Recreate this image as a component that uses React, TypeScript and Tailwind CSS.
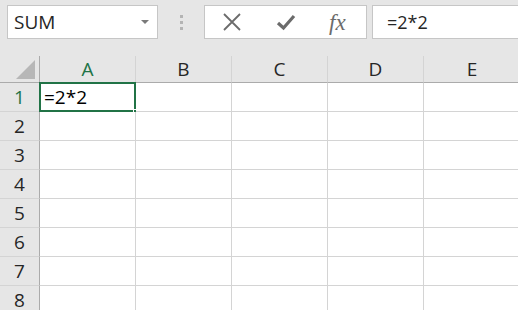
const cols = ['A', 'B', 'C', 'D', 'E'];
const rows = [1, 2, 3, 4, 5, 6, 7, 8];

const FormulaBar = () => (
  <div className="h-[56px] bg-[#e6e6e6] flex items-start pt-[5px] pl-[7px]">
    {/* Name box */}
    <div className="w-[151px] h-[34px] bg-white border border-[#c6c6c6] flex items-center justify-between pl-[6px] pr-[8px]">
      <span className="text-[19px] text-[#262626]">SUM</span>
      <svg width="8" height="4" viewBox="0 0 8 4">
        <path d="M0 0 L8 0 L4 4 Z" fill="#7a7a7a" />
      </svg>
    </div>

    {/* Separator dots */}
    <div className="w-[46px] h-[34px] flex flex-col items-center justify-center gap-[3px]">
      <div className="w-[3px] h-[3px] bg-[#b4b4b4]" />
      <div className="w-[3px] h-[3px] bg-[#b4b4b4]" />
      <div className="w-[3px] h-[3px] bg-[#b4b4b4]" />
    </div>

    {/* Cancel / enter / fx */}
    <div className="w-[163px] h-[34px] bg-white border border-[#c6c6c6] flex items-center pl-[18px]">
      <svg width="18" height="18" viewBox="0 0 18 18">
        <path d="M1 1 L17 17 M17 1 L1 17" fill="none" stroke="#6b6b6b" strokeWidth="1.8" />
      </svg>
      <svg className="ml-[34px]" width="22" height="22" viewBox="0 0 22 22">
        <path d="M3 12 L8.5 17 L19 5" fill="none" stroke="#6b6b6b" strokeWidth="3.2" strokeLinejoin="miter" />
      </svg>
      <span
        className="ml-[32px] text-[23px] italic text-[#6b6b6b] leading-none"
        style={{ fontFamily: '"Liberation Serif", serif' }}
      >
        fx
      </span>
    </div>

    {/* Formula input */}
    <div className="ml-[5px] flex-1 h-[34px] bg-white border border-[#c6c6c6] border-r-0 flex items-center pl-[14px]">
      <span className="text-[18px] text-[#262626]">=2*2</span>
    </div>
  </div>
);

const Sheet = () => (
  <div className="grid grid-cols-[40px_96px_96px_96px_96px_96px] grid-rows-[27px_repeat(8,29px)]">
    {/* corner */}
    <div className="bg-[#e6e6e6] border-r border-b border-[#ababab] relative">
      <svg className="absolute right-[4px] bottom-[3px]" width="19" height="19" viewBox="0 0 19 19">
        <path d="M19 0 L19 19 L0 19 Z" fill="#b7b7b7" />
      </svg>
    </div>
    {cols.map((c) => (
      <div
        key={c}
        className={`bg-[#e6e6e6] border-b border-[#ababab] flex items-center justify-center text-[19px] ${
          c === 'A' ? 'text-[#217346] bg-[#e1e1e1]' : 'text-[#262626]'
        } ${c === 'E' ? '' : 'border-r border-r-[#d4d4d4]'}`}
      >
        {c}
      </div>
    ))}
    {rows.map((r) => (
      <>
        <div
          key={`h${r}`}
          className={`bg-[#e6e6e6] border-r border-r-[#ababab] border-b border-b-[#d4d4d4] flex items-center justify-center text-[19px] ${
            r === 1 ? 'text-[#217346]' : 'text-[#262626]'
          }`}
        >
          {r}
        </div>
        {cols.map((c) => (
          <div
            key={`${c}${r}`}
            className="bg-white border-r border-b border-[#d4d4d4] relative"
          >
            {c === 'A' && r === 1 && (
              <>
                <div className="absolute -left-[1px] -top-[1px] -right-[1px] -bottom-[1px] border-2 border-[#217346] flex items-center pl-[3px]">
                  <span className="text-[19px] text-[#000]">=2*2</span>
                </div>
                <div className="absolute -right-[4px] -bottom-[4px] w-[6px] h-[6px] bg-[#217346] border border-white" />
              </>
            )}
          </div>
        ))}
      </>
    ))}
  </div>
);

export default function App() {
  return (
    <div
      className="w-[518px] h-[310px] overflow-hidden bg-white"
      style={{ fontFamily: '"Open Sans", "Noto Sans", sans-serif' }}
    >
      <FormulaBar />
      <Sheet />
    </div>
  );
}
